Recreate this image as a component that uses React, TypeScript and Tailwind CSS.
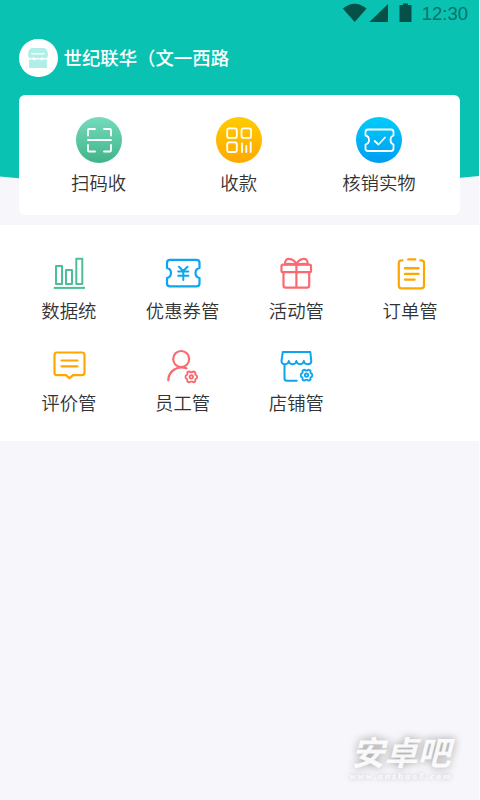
import { ReactNode } from "react";

interface IItem {
  label: string;
  icon: ReactNode;
}

const Gear = ({ cx, cy }: { cx: number; cy: number }) => (
  <g transform={`translate(${cx} ${cy})`} strokeWidth="1.9">
    <path d="M-3 -5.2 Q-1.8 -5.8 -1.2 -4.7 H1.2 Q1.8 -5.8 3 -5.2 L4.1 -4.3 Q3.4 -2.8 4.4 -2 Q5.8 -1.7 5.8 0 Q5.8 1.7 4.4 2 Q3.4 2.8 4.1 4.3 L3 5.2 Q1.8 5.8 1.2 4.7 H-1.2 Q-1.8 5.8 -3 5.2 L-4.1 4.3 Q-3.4 2.8 -4.4 2 Q-5.8 1.7 -5.8 0 Q-5.8 -1.7 -4.4 -2 Q-3.4 -2.8 -4.1 -4.3 Z" />
    <circle r="1.7" />
  </g>
);

const Icon = ({ color, children }: { color: string; children: ReactNode }) => (
  <svg
    width="36"
    height="36"
    viewBox="0 0 36 36"
    fill="none"
    stroke={color}
    strokeWidth="2.2"
    strokeLinecap="round"
    strokeLinejoin="round"
  >
    {children}
  </svg>
);

const CircleIcon = ({ children }: { children: ReactNode }) => (
  <svg
    width="46"
    height="46"
    viewBox="0 0 46 46"
    fill="none"
    stroke="#fff"
    strokeWidth="1.8"
    strokeLinecap="round"
    strokeLinejoin="round"
  >
    {children}
  </svg>
);

const actions: (IItem & { bg: string })[] = [
  {
    label: "扫码收",
    bg: "bg-linear-to-b from-[#74dbbd] to-[#3fb488]",
    icon: (
      <CircleIcon>
        <path d="M19 12H13Q12 12 12 13V18.5 M28 12H34Q35 12 35 13V18.5 M12 28V33.500Q12 34.500 13 34.500H19 M35 28V33.500Q35 34.500 34 34.500H28 M12 23H35" />
      </CircleIcon>
    ),
  },
  {
    label: "收款",
    bg: "bg-linear-to-b from-[#ffcc00] to-[#ffa800]",
    icon: (
      <CircleIcon>
        <rect x="11.200" y="11.300" width="9.600" height="9.600" rx="2" />
        <rect x="25.500" y="11.300" width="9.600" height="9.600" rx="2" />
        <rect x="11.200" y="25.400" width="9.600" height="9.600" rx="2" />
        <path d="M26 26.500V35 M30.300 29V35 M34.700 25.500V35" />
      </CircleIcon>
    ),
  },
  {
    label: "核销实物",
    bg: "bg-linear-to-b from-[#00ccfa] to-[#009df0]",
    icon: (
      <CircleIcon>
        <path d="M12 12.500H35Q37.500 12.500 37.500 15V18.500Q34.500 19.300 34.500 23Q34.500 26.500 37.500 27.500V31.500Q37.500 34 35 34H12Q9.500 34 9.500 31.500V27.500Q13 26.500 13 23Q13 19.300 9.500 18.500V15Q9.500 12.500 12 12.500Z" />
        <path d="M18.700 24L22.500 27.500L29 20.500" />
      </CircleIcon>
    ),
  },
];

const menus: IItem[] = [
  {
    label: "数据统",
    icon: (
      <Icon color="#4cbf96">
        <path
          d="M5 10H11V28H5Z M15 14H21V28H15Z M25.300 2.700H31.300V28H25.300Z"
          strokeWidth="2"
        />
        <path d="M2.800 31.900H34" strokeLinecap="butt" strokeWidth="2" />
      </Icon>
    ),
  },
  {
    label: "优惠券管",
    icon: (
      <Icon color="#0da5ee">
        <path d="M5 3.800H31.500Q34.500 3.800 34.500 6.800V12Q30.500 13 30.500 17Q30.500 21 34.500 22V27.500Q34.500 30.300 31.500 30.300H5Q2 30.300 2 27.500V22Q6 21 6 17Q6 13 2 12V6.800Q2 3.800 5 3.800Z" />
        <path
          d="M14 10.700L18.200 15L22.500 10.700 M13.200 15.500H23.400 M13.200 19.800H23.400 M18.300 15V24"
          strokeWidth="2"
        />
      </Icon>
    ),
  },
  {
    label: "活动管",
    icon: (
      <Icon color="#f96b71">
        <rect x="3.500" y="8.600" width="29.500" height="7.600" rx="1.500" />
        <path d="M5.500 16.200V29.500Q5.500 31.700 7.700 31.700H29Q31.200 31.700 31.200 29.500V16.200 M18.400 8.600V31.700" />
        <path d="M18.400 8.600C14.500 8 8.500 7.500 7.300 8.600C6.500 4 9 2.500 11.500 2.900C14.500 3.300 17.300 5.800 18.400 8.600C19.500 5.800 22.300 3.300 25.300 2.900C27.800 2.500 30 4 29.500 8.600C28 7.500 22.300 8 18.400 8.600Z" />
      </Icon>
    ),
  },
  {
    label: "订单管",
    icon: (
      <Icon color="#ffa600">
        <path d="M10.500 4.400H9.500Q6.800 4.400 6.800 7V29.500Q6.800 32.300 9.500 32.300H29.300Q32 32.300 32 29.500V7Q32 4.400 29.300 4.400H28.300" />
        <path
          d="M16.300 3.400H23.200 M13 12.200H26.500 M13 17.900H26.500 M13 23.600H22.500"
          strokeWidth="2.400"
        />
      </Icon>
    ),
  },
  {
    label: "评价管",
    icon: (
      <Icon color="#ffa600">
        <path d="M6 4.500H31Q33.500 4.500 33.500 7V24.800Q33.500 27.100 31 27.100H22L18.500 30.300L15 27.100H6Q3.500 27.100 3.500 24.800V7Q3.500 4.500 6 4.500Z" />
        <path d="M10.500 12.500H26.500 M10.500 18.300H26.500" />
      </Icon>
    ),
  },
  {
    label: "员工管",
    icon: (
      <Icon color="#f96b71">
        <circle cx="16.200" cy="11" r="8" />
        <path d="M21.500 20.300C12 17 3.500 23.500 3.300 32.300" />
        <Gear cx={26.300} cy={28.900} />
      </Icon>
    ),
  },
  {
    label: "店铺管",
    icon: (
      <Icon color="#0da5ee">
        <path
          d="M4.800 4H32.300L33.300 13C33.300 17.300 26.200 17.300 25.800 13C25.400 17.300 18.800 17.300 18.400 13C18 17.300 11.200 17.300 10.800 13C10.400 17.300 3.400 17.300 3.500 13Z"
          strokeWidth="2"
        />
        <path d="M6.500 16.500V30.500Q6.500 32.800 9 32.800H18.700" strokeWidth="2" />
        <Gear cx={28.500} cy={27.200} />
      </Icon>
    ),
  },
];

export default function App() {
  return (
    <div className="h-[800px] w-[480px] overflow-hidden bg-white font-['Noto_Sans_CJK_SC',sans-serif]">
      <div className="relative flex h-full w-[479px] flex-col bg-[#f6f6fb] text-[#333]">
        <div className="relative flex h-[225px] flex-col">
          <svg
            className="absolute inset-x-0 top-0"
            width="479"
            height="190"
            viewBox="0 0 479 190"
          >
            <path d="M0 0H479V176Q239.500 202 0 176.500Z" fill="#09c2b2" />
          </svg>

          {/* Status bar */}
          <div className="relative flex h-[27px] items-center justify-end pr-[11px] text-[#055048]">
            <svg width="72" height="27" viewBox="0 0 72 27" fill="currentColor">
              <path d="M1.800 8.500Q13.700 -1 25.600 8.500L13.700 22Z" />
              <path d="M28.500 22L47 4V22Z" />
              <path d="M58.500 5H62V3.500H67V5H70.500V22H58.500Z" />
            </svg>
            <span className="ml-[9px] font-['Liberation_Sans',sans-serif] text-[18.500px] leading-[27px] text-[#067268]">
              12:30
            </span>
          </div>

          {/* Shop */}
          <div className="relative mt-[12px] flex h-[38px] items-center pl-[19px]">
            <div className="flex size-[38.500px] items-center justify-center rounded-full bg-white">
              <svg width="22" height="22" viewBox="0 0 22 22">
                <path
                  d="M5 1H17Q20.500 1.500 21 7.500Q21 11 18.500 11.300Q16 11.500 15 10Q13 12.500 11 10.500Q9 12.500 7 10Q5.500 11.500 3 11.300Q0.800 10.500 1 7.500Q1.500 1.500 5 1Z M2 12.500H6L7.500 13.500L9 12.500H13L14.500 13.500L16 12.500H20V20Q20 21 19 21H3Q2 21 2 20Z"
                  fill="#b0efe7"
                />
                <path d="M5 6.800H17" stroke="#fff" strokeWidth="1.500" strokeLinecap="round" />
              </svg>
            </div>
            <span className="mb-[2px] ml-[6px] text-[18.400px] font-medium leading-[36px] text-white">
              世纪联华（文一西路
            </span>
          </div>

          {/* Actions */}
          <div className="relative mx-[19px] mt-[18px] grid h-[120px] grid-cols-3 rounded-[6px] bg-white pt-[22px] pr-[11px] pl-[9.500px]">
            {actions.map((item) => (
              <div key={item.label} className="flex flex-col items-center">
                <div className={`size-[46px] rounded-full ${item.bg}`}>
                  {item.icon}
                </div>
                <span className="mt-[6px] text-[18.400px] font-[350] leading-[27px]">
                  {item.label}
                </span>
              </div>
            ))}
          </div>
        </div>

        {/* Menu */}
        <div className="grid h-[216px] auto-rows-[92px] grid-cols-4 bg-white px-[12px] pt-[31px]">
          {menus.map((item) => (
            <div key={item.label} className="flex flex-col items-center">
              {item.icon}
              <span className="mt-[5px] text-[18.400px] font-[350] leading-[27px]">
                {item.label}
              </span>
            </div>
          ))}
        </div>

        {/* Watermark */}
        <div className="absolute top-[731px] left-[344px] flex w-[114px] flex-col items-center text-white/90">
          <span className="text-[33px] font-bold italic leading-[40px] whitespace-nowrap [text-shadow:0_0_8px_#999]">
            安卓吧
          </span>
          <span className="font-['Liberation_Serif',serif] text-[9px] font-bold italic leading-[10px] tracking-[2.200px] whitespace-nowrap [text-shadow:0_0_5px_#aaa]">
            www.anzhuo8.com
          </span>
        </div>
      </div>
    </div>
  );
}
